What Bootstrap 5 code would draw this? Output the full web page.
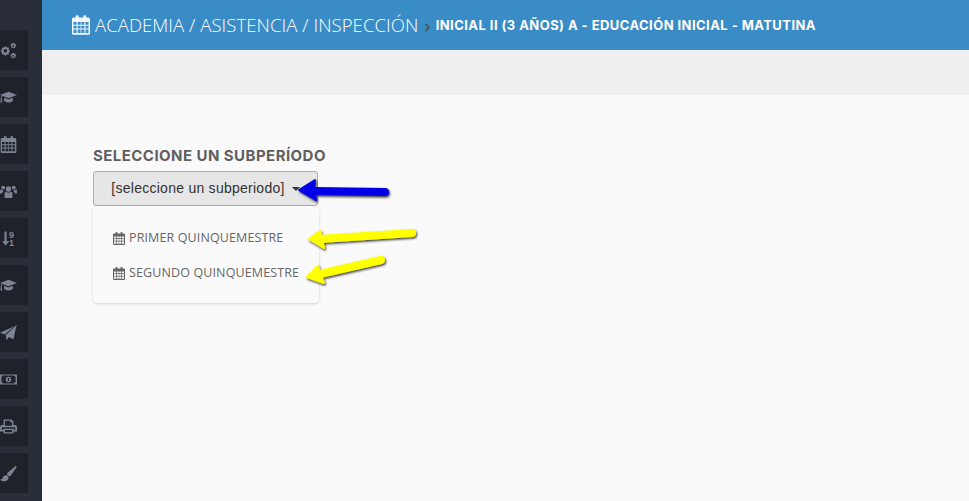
<!DOCTYPE html>
<html lang="en">
<head>
  <meta charset="UTF-8" />
  <meta name="viewport" content="width=device-width, initial-scale=1.0"/>
  <title>Asistencia</title>
  <link href="https://cdn.jsdelivr.net/npm/bootstrap@5.3.2/dist/css/bootstrap.min.css" rel="stylesheet">
  <style>
    html, body { height: 100%; overflow: hidden; }
    body { background: #fafafa; font-family: "Open Sans", sans-serif; }
    .page-wrap { height: 501px; position: relative; }
    .side-rail { width: 42px; background: #2a2e39; padding-top: 30px; gap: 7px; flex-shrink: 0; }
    .rail-item { width: 28px; height: 40px; background: #1f222b; color: #7e8494; display: flex; align-items: center; }
    .rail-item svg { width: 17px; height: 17px; fill: currentColor; }
    .rail-item .sort-arrow { width: 9px; flex-shrink: 0; }
    .sort-digits { font-family: "Liberation Sans", sans-serif; font-size: 9px; font-weight: 700; line-height: 8px; margin-top: 1px; }
    .top-head { height: 50px; background: #3a8cc6; color: #fff; padding-left: 30px; }
    .head-cal { width: 18px; height: 20px; fill: #f2f8fc; margin-right: 5px; }
    .head-title { font-size: 18.5px; font-weight: 300; white-space: nowrap; letter-spacing: .06px; }
    .head-sep { color: #4a5560; font-size: 19px; line-height: 1; margin: 3px 5px 0 6px; font-weight: 600; }
    .head-sub { font-family: Inter, sans-serif; font-size: 13px; font-weight: 700; white-space: nowrap; margin-top: 2px; letter-spacing: .44px; }
    .sub-head { height: 45px; background: #efefef; }
    .body-area { padding: 52px 0 0 51px; }
    .pick-label { font-family: Inter, sans-serif; font-size: 15px; font-weight: 700; color: #5f5f5f; line-height: 17px; margin-bottom: 7px; letter-spacing: .45px; white-space: nowrap; }
    .pick-btn { width: 225px; height: 35px; background: #e6e6e6; border: 1px solid #adadad; border-radius: 3px; color: #333; font-family: "Liberation Sans", sans-serif; font-size: 14px; letter-spacing: .26px; padding: 0; display: block; }
    .pick-btn::after { margin-left: 7px; vertical-align: 2px; border-top-color: #333; }
    .pick-menu { position: static; display: block; width: 226px; height: 97px; margin-top: 0; padding: 15px 0; border: 0; border-radius: 4px; background: #fafafa; box-shadow: 0 1px 3px rgba(0,0,0,.16); }
    .pick-menu .dropdown-item { padding: 0 20px; height: 35px; display: flex; align-items: center; color: #666; font-size: 12.5px; letter-spacing: .12px; }
    .pick-menu svg { width: 12px; height: 13px; fill: #666; margin-right: 4px; flex-shrink: 0; }
    .note-arrows { position: absolute; left: 290px; top: 170px; width: 140px; height: 125px; overflow: visible; }
  </style>
</head>
<body>
  <svg width="0" height="0" class="d-block position-absolute">
    <symbol id="ic-cal" viewBox="0 0 24 26">
      <path fill-rule="evenodd" d="M2 3h3V1.500a1.500 1.500 0 0 1 1.500-1.500h1A1.500 1.500 0 0 1 9 1.500V3h6V1.500A1.500 1.500 0 0 1 16.500 0h1A1.500 1.500 0 0 1 19 1.500V3h3a2 2 0 0 1 2 2v19a2 2 0 0 1-2 2H2a2 2 0 0 1-2-2V5a2 2 0 0 1 2-2zM2 9v3.500h4V9zm5.500 0v3.500h4V9zm5 0v3.500h4V9zm5.500 0v3.500h4V9zM2 14v3.500h4V14zm5.500 0v3.500h4V14zm5 0v3.500h4V14zm5.500 0v3.500h4V14zM2 19v4.500h4V19zm5.500 0v4.500h4V19zm5 0v4.500h4V19zm5.500 0v4.500h4V19z"/>
    </symbol>
    <symbol id="ic-cogs" viewBox="0 0 24 24">
      <path fill-rule="evenodd" d="M7 6l1.800.3.700 1.900 1.900-.7 1.500 1.500-.9 1.800 1.900.9v2.200l-1.900.8.800 1.900-1.500 1.500-1.900-.8-.7 1.900H6.500l-.7-1.900-1.900.8-1.500-1.500.8-1.900-1.900-.8v-2.200l1.900-.9-.8-1.800 1.500-1.500 1.900.7zM7.500 10a2.500 2.500 0 1 0 0 5 2.500 2.500 0 0 0 0-5z"/>
      <path fill-rule="evenodd" d="M18.500 1l1 .2.400 1.100 1.200-.4.900.9-.5 1.100 1.100.5v1.200l-1.100.5.500 1.100-.9.900-1.200-.4-.4 1.100h-1.400l-.4-1.100-1.200.4-.9-.9.500-1.100-1.100-.5V4.400l1.100-.5-.5-1.100.9-.9 1.200.4zm.2 3.300a1.200 1.200 0 1 0 0 2.400 1.200 1.200 0 0 0 0-2.400zM18.500 15l1 .2.400 1.100 1.200-.4.900.9-.5 1.100 1.100.5v1.200l-1.100.5.500 1.100-.9.900-1.200-.4-.4 1.100h-1.400l-.4-1.100-1.200.4-.9-.9.500-1.100-1.100-.5v-1.200l1.100-.5-.5-1.100.9-.9 1.200.4zm.2 3.300a1.200 1.200 0 1 0 0 2.400 1.200 1.200 0 0 0 0-2.400z"/>
    </symbol>
    <symbol id="ic-cap" viewBox="0 0 24 24">
      <path d="M12 4L24 8.500 12 13 3.500 9.800C2.700 10.600 2.400 11.500 2.300 12.500c.5.300.5 1 .1 1.300L3 19H.5l.6-5.200c-.4-.4-.4-1 .1-1.300.1-1.300.5-2.600 1.300-3.500L0 8.500zM6 12.500l6 2.200 6-2.200.3 3.500C18.300 17.500 15.500 19 12 19s-6.300-1.500-6.300-3z"/>
    </symbol>
    <symbol id="ic-users" viewBox="0 0 24 24">
      <circle cx="12" cy="8.500" r="3.800"/><circle cx="4.500" cy="6.500" r="2.700"/><circle cx="19.500" cy="6.500" r="2.700"/>
      <path d="M6.500 14a2.500 2.500 0 0 1 2.500-1.500c1 .8 2 1.200 3 1.200s2-.4 3-1.200a2.500 2.500 0 0 1 2.500 1.500V21H6.500zM0 11c0-1 .6-1.800 1.500-1.800.8.700 1.800 1.100 3 1-.4 1-.2 1.800.1 2.500-1 .3-1.800 1-2.100 2H0zM24 11c0-1-.6-1.800-1.500-1.800-.8.700-1.800 1.100-3 1 .4 1 .2 1.800-.1 2.500 1 .3 1.800 1 2.100 2h2.500z"/>
    </symbol>
    <symbol id="ic-plane" viewBox="0 0 24 24">
      <path d="M23.500 1L19 21.500l-6.500-3L9.500 23l-1.500-7zM0 12.500L20 3 7 14.800z"/>
    </symbol>
    <symbol id="ic-money" viewBox="0 0 24 24">
      <path fill-rule="evenodd" d="M0 5h24v14H0zM2 8v8a2.500 2.500 0 0 1 2 1.500h16A2.500 2.500 0 0 1 22 16V8a2.500 2.500 0 0 1-2-1.500H4A2.500 2.500 0 0 1 2 8zm10 0c2.200 0 4 1.800 4 4s-1.800 4-4 4-4-1.800-4-4 1.800-4 4-4zm-1 2v4h2v-4z"/>
    </symbol>
    <symbol id="ic-print" viewBox="0 0 24 24">
      <path fill-rule="evenodd" d="M5 2h11l3 3v5h2a3 3 0 0 1 3 3v6h-5v3H5v-3H0v-6a3 3 0 0 1 3-3h2zm2 2v7h10V6h-2.500V4zM2.500 13v3.500H5V15h14v1.500h2.500V13zM7 17v3h10v-3z"/>
    </symbol>
    <symbol id="ic-brush" viewBox="0 0 24 24">
      <path d="M22.500 1c1 .6 1 2 .3 3L15 15c-.7.800-1.500 1.200-2.500.8L10 13.500c-.3-1 0-1.800.8-2.500zM8.800 14.500c1.500.2 3 1.500 3.200 3.200.3 3.300-3 5.300-6 5.300-2.500 0-4.500-.8-6-2.500 1.500.2 3-.3 3.700-2 .7-2 2.400-4.200 5.100-4z"/>
    </symbol>
  </svg>

  <div class="page-wrap d-flex">
    <div class="side-rail d-flex flex-column">
      <div class="rail-item"><svg><use href="#ic-cogs"/></svg></div>
      <div class="rail-item"><svg><use href="#ic-cap"/></svg></div>
      <div class="rail-item"><svg><use href="#ic-cal"/></svg></div>
      <div class="rail-item"><svg><use href="#ic-users"/></svg></div>
      <div class="rail-item">
        <svg class="sort-arrow" viewBox="0 0 12 24"><path d="M4 2h3v14h3.500L5.500 22 .5 16H4z" transform="translate(2 0)"/></svg>
        <div class="sort-digits"><div>9</div><div>1</div></div>
      </div>
      <div class="rail-item"><svg><use href="#ic-cap"/></svg></div>
      <div class="rail-item"><svg><use href="#ic-plane"/></svg></div>
      <div class="rail-item"><svg><use href="#ic-money"/></svg></div>
      <div class="rail-item"><svg><use href="#ic-print"/></svg></div>
      <div class="rail-item"><svg><use href="#ic-brush"/></svg></div>
    </div>

    <div class="flex-grow-1">
      <div class="top-head d-flex align-items-center">
        <svg class="head-cal"><use href="#ic-cal"/></svg>
        <span class="head-title">ACADEMIA / ASISTENCIA / INSPECCIÓN</span>
        <span class="head-sep">›</span>
        <span class="head-sub">INICIAL II (3 AÑOS) A - EDUCACIÓN INICIAL - MATUTINA</span>
      </div>
      <div class="sub-head"></div>
      <div class="body-area">
        <div class="pick-label">SELECCIONE UN SUBPERÍODO</div>
        <button type="button" class="btn dropdown-toggle pick-btn">[seleccione un subperiodo]</button>
        <ul class="dropdown-menu pick-menu list-unstyled">
          <li><a class="dropdown-item" href="#"><svg><use href="#ic-cal"/></svg>PRIMER QUINQUEMESTRE</a></li>
          <li><a class="dropdown-item" href="#"><svg><use href="#ic-cal"/></svg>SEGUNDO QUINQUEMESTRE</a></li>
        </ul>
      </div>
    </div>

    <svg class="note-arrows" viewBox="0 0 140 125">
      <defs>
        <filter id="arrow-shadow" x="-20%" y="-40%" width="140%" height="180%">
          <feDropShadow dx="1" dy="1.500" stdDeviation="1" flood-color="#000" flood-opacity=".8"/>
        </filter>
      </defs>
      <g filter="url(#arrow-shadow)" stroke-linecap="round" stroke-linejoin="round">
        <path d="M22 21L95 22" stroke="#0000e6" stroke-width="8" fill="none"/>
        <path d="M9 20L25 10l-1 10 2 10z" fill="#0000e6" stroke="#0000e6" stroke-width="2"/>
        <path d="M30 69L122 63" stroke="#ffff00" stroke-width="8" fill="none"/>
        <path d="M19 69L30 61l2 8 2 9z" fill="#ffff00" stroke="#ffff00" stroke-width="2"/>
        <path d="M30 104L91 90" stroke="#ffff00" stroke-width="8" fill="none"/>
        <path d="M17 107L28 96l2 8 4 9z" fill="#ffff00" stroke="#ffff00" stroke-width="2"/>
      </g>
    </svg>
  </div>
</body>
</html>
